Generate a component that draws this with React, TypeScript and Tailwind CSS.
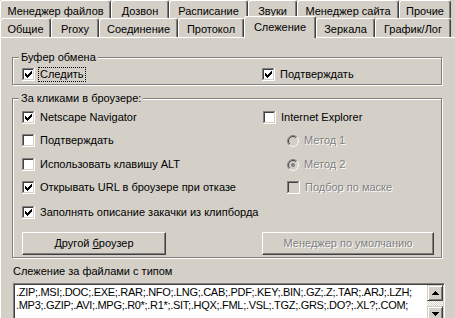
import React from 'react';

const disabledText = 'text-[#808080] [text-shadow:1px_1px_0_#fff]';

const topRow = [
  { label: 'Менеджер файлов', w: 'w-[111px]' },
  { label: 'Дозвон', w: 'w-[58px]' },
  { label: 'Расписание', w: 'w-[79px]' },
  { label: 'Звуки', w: 'w-[49px]' },
  { label: 'Менеджер сайта', w: 'w-[102px]' },
  { label: 'Прочие', w: 'w-[52px]' },
];

const bottomRow = [
  { label: 'Общие', w: 'w-[51px]' },
  { label: 'Proxy', w: 'w-[48px]' },
  { label: 'Соединение', w: 'w-[79px]' },
  { label: 'Протокол', w: 'w-[66px]' },
  { label: 'Слежение', w: 'w-[72px]', active: true },
  { label: 'Зеркала', w: 'w-[59px]' },
  { label: 'График/Лог', w: 'w-[76px]' },
];

const tabEdge =
  'border-t border-l border-r border-t-white border-l-white border-r-[#404040] shadow-[inset_-1px_0_0_#808080] rounded-t-[3px] text-center pt-[4px] leading-[13px] whitespace-nowrap';

function Check({ checked, disabled }: { checked?: boolean; disabled?: boolean }) {
  const mark = [[3, 5], [4, 6], [5, 7], [6, 6], [7, 5], [8, 4], [9, 3]];
  return (
    <svg width="13" height="13" viewBox="0 0 13 13" shapeRendering="crispEdges" className="shrink-0">
      <rect width="13" height="13" fill="#fff" />
      <rect width="12" height="1" fill="#808080" />
      <rect width="1" height="12" fill="#808080" />
      <rect x="1" y="1" width="10" height="1" fill="#404040" />
      <rect x="1" y="1" width="1" height="10" fill="#404040" />
      <rect x="1" y="11" width="11" height="1" fill="#d4d0c8" />
      <rect x="11" y="1" width="1" height="11" fill="#d4d0c8" />
      <rect x="2" y="2" width="9" height="9" fill={disabled ? '#d4d0c8' : '#fff'} />
      {checked &&
        mark.map(([x, y]) => (
          <rect key={x} x={x} y={y} width="1" height="3" fill={disabled ? '#808080' : '#000'} />
        ))}
    </svg>
  );
}

function Radio({ checked }: { checked?: boolean }) {
  const arc = (r: number, sweep: number) => {
    const d = r * Math.SQRT1_2;
    return `M${6 - d} ${6 + d}A${r} ${r} 0 0 ${sweep} ${6 + d} ${6 - d}`;
  };
  return (
    <svg width="12" height="12" viewBox="0 0 12 12" className="shrink-0">
      <circle cx="6" cy="6" r="4.5" fill="#d4d0c8" />
      <path d={arc(5.5, 1)} stroke="#808080" fill="none" />
      <path d={arc(5.5, 0)} stroke="#fff" fill="none" />
      <path d={arc(4.5, 1)} stroke="#404040" fill="none" />
      <path d={arc(4.5, 0)} stroke="#d4d0c8" fill="none" />
      {checked && <circle cx="6" cy="6" r="2" fill="#808080" />}
    </svg>
  );
}

function Item({
  label,
  checked,
  radio,
  disabled,
  focus,
}: {
  label: string;
  checked?: boolean;
  radio?: boolean;
  disabled?: boolean;
  focus?: boolean;
}) {
  return (
    <div className="flex items-center h-[13px]">
      {radio ? <Radio checked={checked} /> : <Check checked={checked} disabled={disabled} />}
      <span
        className={
          'ml-[3px] px-[1px] border border-dotted leading-[13px] whitespace-nowrap ' +
          (focus ? 'border-black ' : 'border-transparent ') +
          (disabled ? disabledText : '')
        }
      >
        {label}
      </span>
    </div>
  );
}

function GroupBox({ title, className, children }: { title: string; className: string; children: React.ReactNode }) {
  return (
    <div className={'relative w-[430px] border border-[#808080] shadow-[inset_1px_1px_0_#fff,1px_1px_0_#fff] ' + className}>
      <span className="absolute left-[6px] top-[-7px] px-[2px] bg-[#d4d0c8] leading-[13px] whitespace-nowrap">
        {title}
      </span>
      {children}
    </div>
  );
}

const raised =
  'border border-t-white border-l-white border-r-[#404040] border-b-[#404040] shadow-[inset_-1px_-1px_0_#808080,inset_1px_1px_0_#d4d0c8]';

const scrollBtn =
  'h-[16px] flex items-center justify-center bg-[#d4d0c8] border border-t-[#d4d0c8] border-l-[#d4d0c8] border-r-[#404040] border-b-[#404040] shadow-[inset_1px_1px_0_#fff,inset_-1px_-1px_0_#808080]';

export default function App() {
  return (
    <div className="w-[455px] h-[318px] overflow-hidden bg-[#d4d0c8] text-black text-[11px] leading-[13px] font-['Liberation_Sans',Arial,sans-serif]">
      <div className="flex h-[18px]">
        {topRow.map((t) => (
          <div key={t.label} className={'h-[18px] ' + t.w + ' ' + tabEdge}>
            {t.label}
          </div>
        ))}
      </div>
      <div className="flex items-start h-[19px]">
        {bottomRow.map((t) =>
          t.active ? (
            <div key={t.label} className={'relative z-10 h-[22px] -mt-[2px] bg-[#d4d0c8] ' + t.w + ' ' + tabEdge}>
              {t.label}
            </div>
          ) : (
            <div key={t.label} className={'h-[19px] ' + t.w + ' ' + tabEdge}>
              {t.label}
            </div>
          )
        )}
      </div>

      <div className="flex flex-col border-t border-l border-t-white border-l-white pl-[11px]">
        <GroupBox title="Буфер обмена" className="mt-[19px] h-[28px]">
          <div className="flex pt-[10px] pl-[9px]">
            <div className="w-[240px]">
              <Item label="Следить" checked focus />
            </div>
            <Item label="Подтверждать" checked />
          </div>
        </GroupBox>

        <GroupBox title="За кликами в броузере:" className="mt-[13px] h-[160px]">
          <div className="flex flex-col pt-[12px] pl-[9px]">
            <div className="flex">
              <div className="w-[241px]">
                <Item label="Netscape Navigator" checked />
              </div>
              <Item label="Internet Explorer" />
            </div>
            <div className="flex mt-[10px]">
              <div className="w-[241px]">
                <Item label="Подтверждать" />
              </div>
              <div className="pl-[24px]">
                <Item label="Метод 1" radio disabled />
              </div>
            </div>
            <div className="flex mt-[11px]">
              <div className="w-[241px]">
                <Item label="Использовать клавишу ALT" />
              </div>
              <div className="pl-[24px]">
                <Item label="Метод 2" radio checked disabled />
              </div>
            </div>
            <div className="flex mt-[10px]">
              <div className="w-[241px]">
                <Item label="Открывать URL в броузере при отказе" checked />
              </div>
              <div className="pl-[24px]">
                <Item label="Подбор по маске" disabled />
              </div>
            </div>
            <div className="flex mt-[12px]">
              <Item label="Заполнять описание закачки из клипборда" checked />
            </div>
            <div className="flex mt-[13px]">
              <div className={'w-[144px] h-[23px] flex items-center justify-center ' + raised}>
                <span>
                  Другой <u>б</u>роузер
                </span>
              </div>
              <div className={'ml-[96px] w-[172px] h-[23px] flex items-center justify-center ' + raised}>
                <span className={disabledText}>Менеджер по умолчанию</span>
              </div>
            </div>
          </div>
        </GroupBox>

        <div className="mt-[7px] ml-[1px] leading-[13px]">Слежение за файлами с типом</div>

        <div className="mt-[5px] ml-[1px] w-[432px] h-[41px] flex p-[1px] bg-white border border-t-[#808080] border-l-[#808080] border-b-white border-r-white shadow-[inset_1px_1px_0_#404040,inset_-1px_-1px_0_#d4d0c8]">
          <div className="flex-1 overflow-hidden whitespace-nowrap pl-[1px] pt-[1px] leading-[13px] tracking-[-0.3px]">
            <div>.ZIP;.MSI;.DOC;.EXE;.RAR;.NFO;.LNG;.CAB;.PDF;.KEY;.BIN;.GZ;.Z;.TAR;.ARJ;.LZH;</div>
            <div>.MP3;.GZIP;.AVI;.MPG;.R0*;.R1*;.SIT;.HQX;.FML;.VSL;.TGZ;.GRS;.DO?;.XL?;.COM;</div>
          </div>
          <div className="w-[16px] flex flex-col">
            <div className={scrollBtn}>
              <svg width="7" height="4" viewBox="0 0 7 4" shapeRendering="crispEdges">
                <path d="M3 0h1v1h1v1h1v1h1v1H0V3h1V2h1V1h1z" fill="#000" />
              </svg>
            </div>
            <div className="h-[5px] bg-[image:repeating-conic-gradient(#fff_0_25%,#d4d0c8_0_50%)] bg-[length:2px_2px]" />
            <div className={scrollBtn}>
              <svg width="7" height="4" viewBox="0 0 7 4" shapeRendering="crispEdges">
                <path d="M0 0h7v1H6v1H5v1H4v1H3V3H2V2H1V1H0z" fill="#000" />
              </svg>
            </div>
          </div>
        </div>
      </div>
    </div>
  );
}
